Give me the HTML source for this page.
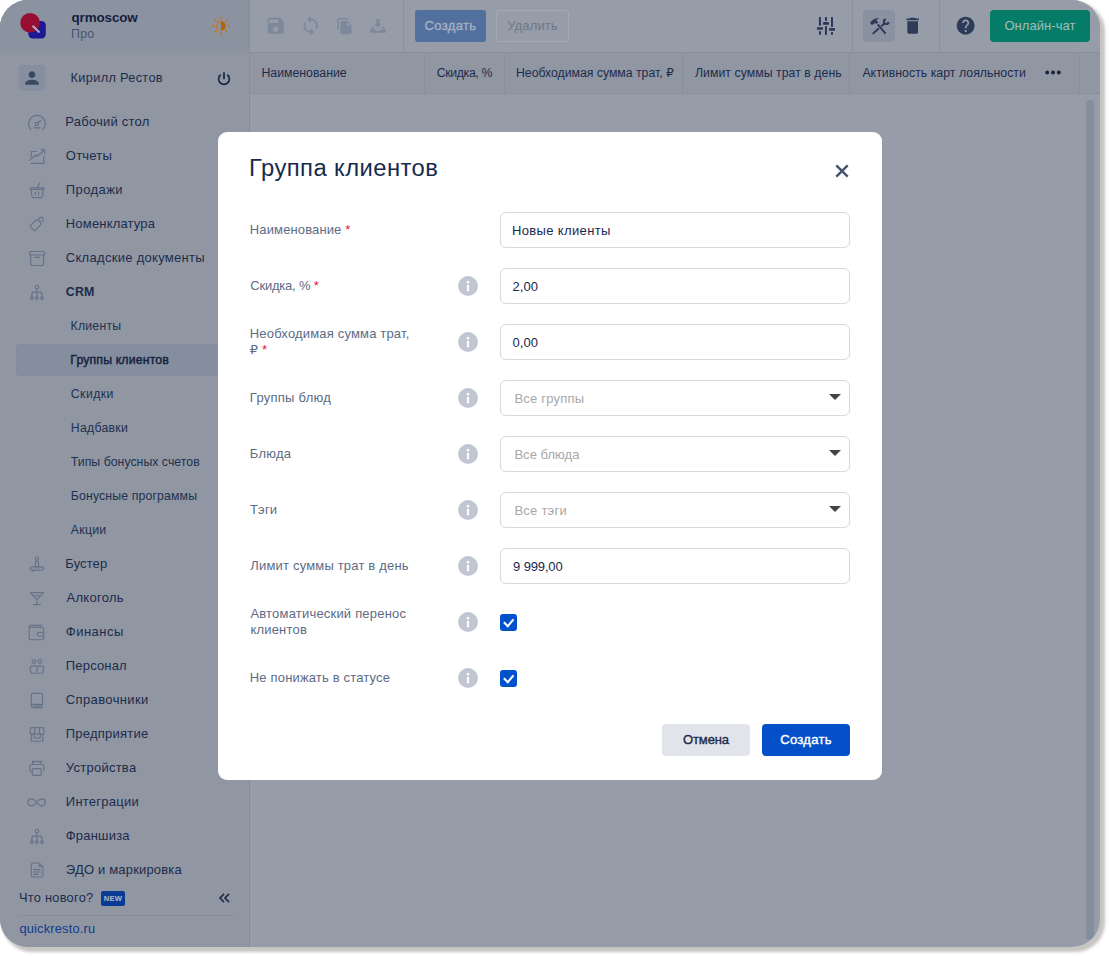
<!DOCTYPE html>
<html lang="ru">
<head>
<meta charset="utf-8">
<title>Группа клиентов</title>
<style>
*{box-sizing:border-box;margin:0;padding:0}
html,body{width:1109px;height:956px;background:#fff;overflow:hidden}
body{font-family:"Liberation Sans","DejaVu Sans",sans-serif;color:#1c2a4a;position:relative}
.abs{position:absolute}
#frame{position:absolute;left:0;top:0;width:1100px;height:947px;border-radius:28px;background:#969da8;overflow:hidden;box-shadow:3.5px 3.5px 3px 1.5px rgba(70,60,60,.30)}
/* sidebar */
#side{z-index:2;position:absolute;left:0;top:0;width:250px;height:947px;background:#9097a3;border-right:1px solid #858d9b}
#shead{position:absolute;left:0;top:0;width:249px;height:52px;background:#8b93a0}
.t{position:absolute;white-space:nowrap;line-height:1}
.mi{position:absolute;left:65.8px;font-size:13px;color:#1d2b4b;white-space:nowrap;line-height:16px;height:16px}
.si{position:absolute;left:70.8px;font-size:12.3px;color:#22304f;white-space:nowrap;line-height:16px;height:16px}
.ico{position:absolute;left:27px;width:20px;height:20px;fill:none;stroke:#667289;stroke-width:1.15;stroke-linecap:round;stroke-linejoin:round}
/* toolbar */
#tbar{position:absolute;left:0;top:0;width:1100px;height:53px;background:#969da8;border-bottom:1px solid #878f9d}
#thead{position:absolute;left:0;top:53px;width:1100px;height:41px;background:#9097a3;border-bottom:1px solid #878f9c}
.th{position:absolute;top:12px;font-size:12.3px;color:#1d2b4b;white-space:nowrap;line-height:16px}
.vd{position:absolute;width:1px;background:#878f9c}
/* modal */
#modal{z-index:3;position:absolute;left:218px;top:132px;width:664px;height:648px;background:#fff;border-radius:9px}
.lbl{position:absolute;left:32px;font-size:13px;color:#5d6b85;line-height:16px;white-space:nowrap}
.req{color:#e5103c}
.inp{position:absolute;left:282px;width:350px;height:36px;border:1px solid #d2dae2;border-radius:6px;background:#fff;font-size:13px;color:#172b4d;line-height:35.6px;padding-left:12px;white-space:nowrap}
.ph{color:#a8a8a8;padding-left:14px}
.arr{position:absolute;right:8px;top:13px;width:0;height:0;border-left:6px solid transparent;border-right:6px solid transparent;border-top:6px solid #444}
.info{position:absolute;left:240px;width:20px;height:20px}
.cb{position:absolute;left:282px;width:17px;height:17px;border-radius:3px;background:#0052cc}
.btn{position:absolute;top:592px;width:88px;height:32px;border-radius:4px;font-size:13px;-webkit-text-stroke:.4px;text-align:center;line-height:32px}
/*FIT*/
#x1{letter-spacing:-0.104px;margin-left:-0.50px}
#x2{letter-spacing:0.275px;margin-left:-1.00px}
#x3{letter-spacing:0.292px;margin-left:-0.40px}
#x4{letter-spacing:0.216px;margin-left:-0.45px}
#x5{letter-spacing:0.230px}
#x6{letter-spacing:0.416px}
#x7{letter-spacing:0.176px}
#x8{letter-spacing:0.292px}
#x9{letter-spacing:0.200px}
#x10{letter-spacing:0.202px;margin-left:-0.25px}
#x11{letter-spacing:0.146px;margin-left:-0.50px}
#x12{letter-spacing:0.410px}
#x13{letter-spacing:0.247px}
#x14{letter-spacing:0.020px}
#x15{letter-spacing:0.132px}
#x16{letter-spacing:0.271px}
#x17{letter-spacing:0.090px;margin-left:-0.50px}
#x18{letter-spacing:0.271px;margin-left:0.75px}
#x19{letter-spacing:0.479px}
#x20{letter-spacing:0.175px}
#x21{letter-spacing:0.375px}
#x22{letter-spacing:0.225px}
#x23{letter-spacing:0.257px}
#x24{letter-spacing:0.237px}
#x25{letter-spacing:0.193px}
#x26{letter-spacing:0.182px}
#x27{letter-spacing:0.280px;margin-left:-0.10px}
#x28{letter-spacing:0.209px;margin-left:0.40px}
#x29{letter-spacing:-0.010px;margin-left:-0.50px}
#x30{letter-spacing:-0.377px;margin-left:-0.20px}
#x31{letter-spacing:-0.029px}
#x32{letter-spacing:0.039px;margin-left:-0.10px}
#x33{letter-spacing:0.028px;margin-left:0.40px}
#x34{letter-spacing:0.420px;margin-left:-0.70px}
#x35{letter-spacing:0.128px;margin-left:-0.20px}
#x36{letter-spacing:0.354px;text-indent:-1.00px}
#x37{letter-spacing:-0.220px;margin-left:0.30px}
#x38{letter-spacing:0.054px;text-indent:-0.50px}
#x39{letter-spacing:0.174px;margin-left:-0.20px}
#x40{letter-spacing:0.054px;text-indent:-0.50px}
#x41{letter-spacing:0.265px;margin-left:-0.20px}
#x42{letter-spacing:0.222px;text-indent:-0.60px}
#x43{letter-spacing:0.229px;margin-left:-0.20px}
#x44{letter-spacing:0.031px;text-indent:-0.60px}
#x45{letter-spacing:0.213px;margin-left:-0.10px}
#x46{letter-spacing:0.250px;text-indent:-0.60px}
#x47{letter-spacing:0.182px;margin-left:0.30px}
#x48{letter-spacing:-0.146px;text-indent:0.10px}
#x49{letter-spacing:0.199px;margin-left:0.40px}
#x50{letter-spacing:0.163px;margin-left:-0.20px}
#x51{letter-spacing:-0.130px}
#x52{letter-spacing:0.315px}
#tb1{letter-spacing:0.357px}
#tb2{letter-spacing:0.125px}
#tb3{letter-spacing:0.055px}
/*ENDFIT*/
</style>
</head>
<body>
<div id="frame">

<!-- ============ SIDEBAR ============ -->
<div id="side">
<div id="shead"></div>
<!-- logo -->
<svg class="abs" style="left:18px;top:10px" width="32" height="32" viewBox="0 0 32 32">
<rect x="10.3" y="11" width="17.5" height="17.6" rx="4.5" fill="#1d1796"/>
<circle cx="12.1" cy="12.8" r="9.8" fill="#960f32"/>
<line x1="14.6" y1="15.8" x2="21.5" y2="22.6" stroke="#a9afba" stroke-width="2.1"/>
</svg>
<div id="x1" class="t" style="left:72px;top:11px;font-size:13.4px;font-weight:bold;color:#14213f;line-height:14px">qrmoscow</div>
<div id="x2" class="t" style="left:72px;top:27px;font-size:12.4px;color:#475470;line-height:14px">Про</div>
<!-- sun / theme -->
<svg class="abs" style="left:211px;top:16px" width="20" height="20" viewBox="-10 -10 20 20">
<g stroke="#c0751c" stroke-width="1.500" stroke-linecap="round"><line x1="6.90" y1="0.00" x2="8.50" y2="0.00"/><line x1="4.88" y1="4.88" x2="6.01" y2="6.01"/><line x1="0.00" y1="6.90" x2="0.00" y2="8.50"/><line x1="-4.88" y1="4.88" x2="-6.01" y2="6.01"/><line x1="-6.90" y1="0.00" x2="-8.50" y2="0.00"/><line x1="-4.88" y1="-4.88" x2="-6.01" y2="-6.01"/><line x1="-0.00" y1="-6.90" x2="-0.00" y2="-8.50"/><line x1="4.88" y1="-4.88" x2="6.01" y2="-6.01"/></g>
<circle r="4.400" fill="none" stroke="#c47820" stroke-width="1.400"/>
<path d="M0 -4.400A4.400 4.400 0 0 1 0 4.400Z" fill="#ab670f"/>
</svg>
<!-- user -->
<div class="abs" style="left:19px;top:65px;width:26px;height:26px;border-radius:4px;background:#868fa0"></div>
<svg class="abs" style="left:22px;top:68px" width="20" height="20" viewBox="0 0 24 24"><path fill="#3b4863" d="M12 12c2.21 0 4-1.79 4-4s-1.79-4-4-4-4 1.79-4 4 1.79 4 4 4zm0 2c-2.67 0-8 1.34-8 4v2h16v-2c0-2.66-5.33-4-8-4z"/></svg>
<div id="x3" class="t" style="left:71px;top:70px;font-size:12.8px;color:#1d2b4b;line-height:16px">Кирилл Рестов</div>
<svg class="abs" style="left:213.800px;top:68.800px" width="20" height="20" viewBox="-10 -10 20 20" fill="none" stroke="#1a2747" stroke-width="1.700" stroke-linecap="butt"><path d="M-3.32 -4.26A5.4 5.4 0 1 0 3.32 -4.26"/><path d="M0 -6.700V.3"/></svg>

<!-- menu -->
<div id="x4" class="mi" style="top:114px">Рабочий стол</div>
<div id="x5" class="mi" style="top:148px">Отчеты</div>
<div id="x6" class="mi" style="top:182px">Продажи</div>
<div id="x7" class="mi" style="top:216px">Номенклатура</div>
<div id="x8" class="mi" style="top:250px">Складские документы</div>
<div id="x9" class="mi" style="top:284px;font-weight:bold;font-size:12.4px">CRM</div>

<div class="abs" style="left:16px;top:344px;width:234px;height:32px;border-radius:4px;background:#858e9f"></div>
<div id="x10" class="si" style="top:318px">Клиенты</div>
<div id="x11" class="si" style="top:352px;font-size:12.3px;color:#16223f;-webkit-text-stroke:.45px #16223f">Группы клиентов</div>
<div id="x12" class="si" style="top:386px">Скидки</div>
<div id="x13" class="si" style="top:420px">Надбавки</div>
<div id="x14" class="si" style="top:454px">Типы бонусных счетов</div>
<div id="x15" class="si" style="top:488px">Бонусные программы</div>
<div id="x16" class="si" style="top:522px">Акции</div>

<div id="x17" class="mi" style="top:556px">Бустер</div>
<div id="x18" class="mi" style="top:590px">Алкоголь</div>
<div id="x19" class="mi" style="top:624px">Финансы</div>
<div id="x20" class="mi" style="top:658px">Персонал</div>
<div id="x21" class="mi" style="top:692px">Справочники</div>
<div id="x22" class="mi" style="top:726px">Предприятие</div>
<div id="x23" class="mi" style="top:760px">Устройства</div>
<div id="x24" class="mi" style="top:794px">Интеграции</div>
<div id="x25" class="mi" style="top:828px">Франшиза</div>
<div id="x26" class="mi" style="top:862px">ЭДО и маркировка</div>

<!-- footer -->
<div id="x27" class="t" style="left:19px;top:890px;font-size:12.8px;color:#1d2b4b;line-height:16px">Что нового?</div>
<div class="abs" style="left:101px;top:891px;width:24px;height:15px;border-radius:2px;background:#0a3a94;color:#b3bccb;font-size:7.600px;font-weight:bold;line-height:15.500px;text-align:center;letter-spacing:.3px">NEW</div>
<svg class="abs" style="left:217px;top:891px" width="14" height="14" viewBox="0 0 14 14" fill="none" stroke="#1d2b4b" stroke-width="1.700"><path d="M7 2.900L3 7l4 4.100M12 2.900L8 7l4 4.100"/></svg>
<div class="abs" style="left:19px;top:915px;width:216px;height:1px;background:#858e9c"></div>
<div id="x28" class="t" style="left:19px;top:920.500px;font-size:12.8px;color:#0f3a8e;line-height:16px">quickresto.ru</div>
<!-- gauge -->
<svg class="ico" style="top:112px" viewBox="0 0 20 20"><path d="M3.730 17.500A8.400 8.400 0 1 1 16.070 17.500"/><circle cx="9.700" cy="12" r="1.700"/><path d="M10.900 10.800L14 8.300M7.100 15.800h5.800"/></svg>
<!-- chart -->
<svg class="ico" style="top:146px" viewBox="0 0 20 20"><path d="M4.300 11V5.500H9.500M4.300 17.400h12.500V10.300M2.200 14.400L9 9l1.300 1.300L17.600 3.700M13.900 3.700h3.700v3.900"/></svg>
<!-- basket -->
<svg class="ico" style="top:180px" viewBox="0 0 20 20"><rect x="2.900" y="7.700" width="14.400" height="1.700" rx=".8"/><path d="M3.900 9.400l1.100 7.300c.1.500.5.900 1 .9h8.200c.5 0 .900-.400 1-.9l1.100-7.300M10.300 7.600l2.400-4.400M8.400 12v3M11.600 12v3"/></svg>
<!-- tag -->
<svg class="ico" style="top:214px" viewBox="0 0 20 20"><path d="M11.900 6H9L3.400 11.700c-.3.300-.3.900 0 1.200l3.700 3.500c.3.300.9.300 1.200 0l5.400-5.800V7.200"/><path d="M12.230 7.340A2.400 2.400 0 1 1 15.610 7.640"/></svg>
<!-- archive -->
<svg class="ico" style="top:248px" viewBox="0 0 20 20"><rect x="2.600" y="3.500" width="15" height="3.500" rx="1"/><path d="M3.700 7v8.500c0 1.100.9 2 2 2h8.800c1.100 0 2-.9 2-2V7M7.600 9.400h4.800"/></svg>
<!-- crm -->
<svg class="ico" style="top:282px" viewBox="0 0 20 20"><circle cx="9.900" cy="5.100" r="1.900"/><path d="M9.900 7v7.600M4.800 14.600v-1.800c0-1.500 1.200-2.700 2.700-2.700h4.800c1.500 0 2.700 1.200 2.700 2.700v1.800"/><circle cx="4.800" cy="16.100" r="1.300"/><circle cx="9.900" cy="16.100" r="1.300"/><circle cx="15" cy="16.100" r="1.300"/></svg>
<!-- booster -->
<svg class="ico" style="top:554px" viewBox="0 0 20 20"><circle cx="9.900" cy="4.600" r="1.600"/><path d="M8.300 14.800V9c0-1.100.7-1.900 1.600-1.900s1.600.8 1.600 1.900v5.800"/><ellipse cx="9.900" cy="14.500" rx="6.800" ry="1.900"/><path d="M5.200 15.700l1.200 1-1.500.6"/></svg>
<!-- martini -->
<svg class="ico" style="top:588px" viewBox="0 0 20 20"><path d="M3.500 4.600h13L9.900 11.900zM9.900 11.900v4.700M6.600 16.600h6.800M6.300 7.700h7.400"/></svg>
<!-- wallet -->
<svg class="ico" style="top:622px" viewBox="0 0 20 20"><path d="M15 3.400H4.200c-1.100 0-2 .9-2 2v10.300c0 1.100.9 2 2 2H15c.8 0 1.500-.7 1.500-1.500V14M2.600 5.300H15c.8 0 1.500.7 1.500 1.500v3.600"/><rect x="10.300" y="10.400" width="6.700" height="3.600" rx="1.200"/></svg>
<!-- people -->
<svg class="ico" style="top:656px" viewBox="0 0 20 20"><circle cx="6.900" cy="5.500" r="1.800"/><circle cx="12.900" cy="5.500" r="1.800"/><path d="M5.400 9.900h2.900c1.300 0 2.200 1 2.200 2.200 0 1.700-.4 3.400-1.200 5.100H4.400c-.8-1.700-1.300-3.400-1.300-5.100 0-1.200 1-2.200 2.300-2.200zM11.400 9.900h2.900c1.300 0 2.300 1 2.300 2.200 0 1.700-.4 3.400-1.200 5.100h-3.800"/></svg>
<!-- book -->
<svg class="ico" style="top:690px" viewBox="0 0 20 20"><path d="M15.500 14.300V4.300c0-.6-.4-1-1-1H6c-1 0-1.700.8-1.700 1.700v10.800c0 1 .8 1.800 1.800 1.800h9.400M15.500 14.300H6c-.9 0-1.700.6-1.700 1.500M6.500 15.800h9"/></svg>
<!-- shop -->
<svg class="ico" style="top:724px" viewBox="0 0 20 20"><path d="M4 3.600h12.200l1.100 4.200c0 1.400-1 2.600-2.400 2.600s-2.400-1.200-2.400-2.600V3.600M12.500 7.800c0 1.400-1.100 2.600-2.400 2.600S7.700 9.200 7.700 7.800V3.600M7.700 7.800c0 1.400-1 2.600-2.400 2.600S2.900 9.200 2.900 7.800L4 3.600M4.300 10.400v6.800h11.500v-6.800M7 11v3h6.200v-3"/></svg>
<!-- printer -->
<svg class="ico" style="top:758px" viewBox="0 0 20 20"><path d="M5.500 6.500V3l1.400 1 1.400-1 1.500 1 1.400-1 1.400 1 1.400-1v3.500M5.300 14H4.400c-.8 0-1.500-.7-1.500-1.500V8c0-.8.700-1.500 1.500-1.500h10.800c.8 0 1.500.7 1.500 1.500v4.500"/><rect x="5.300" y="10.600" width="8.900" height="6.800" rx="1"/></svg>
<!-- infinity -->
<svg class="ico" style="top:792px" viewBox="0 0 20 20"><path d="M9.600 10.300C8 8.400 6.500 6.800 4.600 6.800 2.500 6.800.9 8.400.9 10.300s1.600 3.500 3.700 3.500c1.900 0 3.400-1.600 5-3.500s3.100-3.500 5-3.500c2.100 0 3.700 1.600 3.700 3.500s-1.600 3.500-3.700 3.500c-1.900 0-3.400-1.600-5-3.500z"/></svg>
<!-- franchise -->
<svg class="ico" style="top:826px" viewBox="0 0 20 20"><circle cx="9.900" cy="5.100" r="1.900"/><path d="M9.900 7v7.600M4.800 14.600v-1.800c0-1.500 1.200-2.700 2.700-2.700h4.800c1.500 0 2.700 1.200 2.700 2.700v1.800"/><circle cx="4.800" cy="16.100" r="1.300"/><circle cx="9.900" cy="16.100" r="1.300"/><circle cx="15" cy="16.100" r="1.300"/></svg>
<!-- doc -->
<svg class="ico" style="top:860px" viewBox="0 0 20 20"><path d="M12.200 3H6.100c-1 0-1.800.8-1.800 1.800v10.400c0 1 .8 1.800 1.800 1.800h8c1 0 1.800-.8 1.800-1.800V6.700zM12.200 3v2.500c0 .7.500 1.200 1.200 1.200h2.500M6.700 9.600h6.600M6.700 12h6.600M6.700 14.400h4.600"/></svg>

</div>

<!-- ============ TOOLBAR ============ -->
<div id="tbar">
<!-- left disabled icons (21.33px = 24 * .889) -->
<svg class="abs" style="left:264.800px;top:15.300px" width="21.33" height="21.33" viewBox="0 0 24 24"><path fill="#7d889b" d="M17 3H5c-1.11 0-2 .9-2 2v14c0 1.1.89 2 2 2h14c1.1 0 2-.9 2-2V7l-4-4zm-5 16c-1.66 0-3-1.34-3-3s1.34-3 3-3 3 1.34 3 3-1.34 3-3 3zm3-10H5V5h10v4z"/></svg>
<svg class="abs" style="left:299.700px;top:15.300px" width="21.33" height="21.33" viewBox="0 0 24 24"><path fill="#7d889b" d="M12 4V1L8 5l4 4V6c3.31 0 6 2.69 6 6 0 1.01-.25 1.97-.7 2.8l1.46 1.46C19.54 15.03 20 13.57 20 12c0-4.42-3.58-8-8-8zm0 14c-3.31 0-6-2.69-6-6 0-1.01.25-1.97.7-2.8L5.24 7.74C4.46 8.97 4 10.43 4 12c0 4.42 3.58 8 8 8v3l4-4-4-4v3z"/></svg>
<svg class="abs" style="left:336px;top:16px" width="20" height="20" viewBox="0 0 20 20" fill="#7d889b"><path d="M11.900 2.100H2.700c-.8 0-1.500.7-1.500 1.500v10h1.500v-10h9.200z"/><path d="M5.900 5h5.600l4.100 4.100v7.600c0 .8-.7 1.500-1.500 1.500H5.900c-.8 0-1.500-.7-1.500-1.500V6.500c0-.8.700-1.500 1.500-1.500z"/><path d="M11 6v3.600h3.600z" fill="#969da8"/></svg>
<svg class="abs" style="left:368px;top:16px" width="20" height="20" viewBox="0 0 20 20" fill="#7d889b"><path d="M8.500 2.900h3.100v4.700h2.300L10 11.400 6.100 7.600h2.400z"/><path d="M4.700 10.700h1.800l-2 2.900h2.900c.2.900 1.200 1.700 2.600 1.700s2.400-.8 2.600-1.700h2.900l-2-2.900h1.800l2.600 3.500v1.800c0 .4-.4.800-.8.800H2.900c-.4 0-.8-.4-.8-.8v-1.800z"/></svg>
<div class="vd" style="left:403px;top:0;height:52px"></div>
<!-- buttons -->
<div id="tb1" class="abs" style="left:415px;top:10px;width:71px;height:32px;border-radius:3px;background:#52709e;color:#a3afc4;font-size:13px;-webkit-text-stroke:.4px;text-align:center;line-height:32px">Создать</div>
<div id="tb2" class="abs" style="left:496px;top:10px;width:73px;height:32px;border-radius:3px;border:1px solid #a3aab5;color:#6e788a;font-size:13px;text-align:center;line-height:30px">Удалить</div>
<!-- right icons -->
<svg class="abs" style="left:816px;top:16px" width="20" height="20" viewBox="0 0 20 20" fill="#2a3757">
<rect x="2.950" y="1.100" width="2" height="8.500"/><rect x="1" y="11.200" width="5.900" height="2.600" rx=".3"/><rect x="2.950" y="15.200" width="2" height="3.600"/>
<rect x="8.950" y="1.100" width="2" height="3.700"/><rect x="7.100" y="6.100" width="5.800" height="2.700" rx=".3"/><rect x="8.950" y="10.200" width="2" height="8.600"/>
<rect x="15" y="1.100" width="2" height="9.700"/><rect x="13.100" y="12.100" width="5.800" height="2.700" rx=".3"/><rect x="15" y="16.100" width="2" height="2.700"/>
</svg>
<div class="vd" style="left:852px;top:0;height:52px"></div>
<div class="abs" style="left:863px;top:10px;width:32px;height:32px;border-radius:4px;background:#8a92a2"></div>
<svg class="abs" style="left:868px;top:16px" width="24" height="20" viewBox="0 0 24 20" fill="none" stroke="#2d3a58">
<path d="M9.700 8.300L17.600 17.600" stroke-width="1.900"/>
<path d="M2.100 7.200C3.600 4.300 6.600 1.900 11.700 2.100C9.600 2.600 8.700 3.700 8.500 4.600L10.300 6.300L8.600 8.100L7.300 6.900L3.900 9.100Z" fill="#2d3a58" stroke="none"/>
<path d="M16.600 7.200L13.300 10.200M11 12.200L4.600 17.900" stroke-width="1.900"/>
<path d="M20.560 6.020A2.400 2.400 0 1 1 17.780 3.240" stroke-width="2.100"/>
</svg>
<svg class="abs" style="left:902.300px;top:15.200px" width="21.33" height="21.33" viewBox="0 0 24 24"><path fill="#2d3a58" d="M6 19c0 1.100.9 2 2 2h8c1.100 0 2-.9 2-2V7H6v12zM19 4h-3.500l-1-1h-5l-1 1H5v2h14V4z"/></svg>
<div class="vd" style="left:939px;top:0;height:52px"></div>
<svg class="abs" style="left:955.400px;top:15.300px" width="21.33" height="21.33" viewBox="0 0 24 24"><path fill="#2d3a58" d="M12 2C6.480 2 2 6.480 2 12s4.480 10 10 10 10-4.480 10-10S17.520 2 12 2zm1 17h-2v-2h2v2zm2.070-7.750l-.9.920C13.450 12.900 13 13.500 13 15h-2v-.5c0-1.100.450-2.100 1.170-2.830l1.240-1.260c.370-.360.590-.860.590-1.410 0-1.100-.9-2-2-2s-2 .9-2 2H8c0-2.210 1.790-4 4-4s4 1.790 4 4c0 .880-.360 1.680-.930 2.250z"/></svg>
<div id="tb3" class="abs" style="left:990px;top:10px;width:100px;height:32px;border-radius:4px;background:#057c67;color:#a3bdbb;font-size:13px;text-align:center;line-height:32px">Онлайн-чат</div>

</div>
<div id="thead">
<div id="x29" class="th" style="left:262px">Наименование</div>
<div class="vd" style="left:424px;top:0;height:40px"></div>
<div id="x30" class="th" style="left:437px">Скидка, %</div>
<div class="vd" style="left:504px;top:0;height:40px"></div>
<div id="x31" class="th" style="left:516px">Необходимая сумма трат, ₽</div>
<div class="vd" style="left:682px;top:0;height:40px"></div>
<div id="x32" class="th" style="left:695px">Лимит суммы трат в день</div>
<div class="vd" style="left:849px;top:0;height:40px"></div>
<div id="x33" class="th" style="left:862px">Активность карт лояльности</div>
<svg class="abs" style="left:1045px;top:17.300px" width="16" height="5" viewBox="0 0 16 5" fill="#14213f"><circle cx="2.2" cy="2.5" r="1.9"/><circle cx="8" cy="2.5" r="1.9"/><circle cx="13.800" cy="2.5" r="1.9"/></svg>
<div class="vd" style="left:1079px;top:0;height:40px"></div>

</div>
<!-- scrollbar -->
<div class="abs" style="left:1086px;top:100px;width:8px;height:840px;border-radius:4px;background:#858e9c"></div>

<!-- ============ MODAL ============ -->
<div id="modal">
<div id="x34" class="t" style="left:32px;top:22.500px;font-size:23px;color:#172b4d;line-height:26px;transform:scaleX(1.035);transform-origin:0 0">Группа клиентов</div>
<svg class="abs" style="left:615px;top:30px" width="18" height="18" viewBox="0 0 18 18" fill="none" stroke="#44526e" stroke-width="2.400"><path d="M3.300 3.300l11.400 11.400M14.700 3.300L3.300 14.700"/></svg>

<!-- row 1 -->
<div id="x35" class="lbl" style="top:90px">Наименование <span class="req">*</span></div>
<div id="x36" class="inp" style="top:80px">Новые клиенты</div>
<!-- row 2 -->
<div id="x37" class="lbl" style="top:146px">Скидка, % <span class="req">*</span></div>
<svg class="info" style="top:144px" viewBox="0 0 24 24"><circle cx="12" cy="12" r="12" fill="#c1c7d2"/><rect x="10.700" y="10.800" width="2.600" height="7.400" rx=".3" fill="#fff"/><circle cx="12" cy="7.400" r="1.600" fill="#fff"/></svg>
<div id="x38" class="inp" style="top:136px">2,00</div>
<!-- row 3 -->
<div id="x39" class="lbl" style="top:194px">Необходимая сумма трат,<br>₽ <span class="req">*</span></div>
<svg class="info" style="top:200px" viewBox="0 0 24 24"><circle cx="12" cy="12" r="12" fill="#c1c7d2"/><rect x="10.700" y="10.800" width="2.600" height="7.400" rx=".3" fill="#fff"/><circle cx="12" cy="7.400" r="1.600" fill="#fff"/></svg>
<div id="x40" class="inp" style="top:192px">0,00</div>
<!-- row 4 -->
<div id="x41" class="lbl" style="top:258px">Группы блюд</div>
<svg class="info" style="top:256px" viewBox="0 0 24 24"><circle cx="12" cy="12" r="12" fill="#c1c7d2"/><rect x="10.700" y="10.800" width="2.600" height="7.400" rx=".3" fill="#fff"/><circle cx="12" cy="7.400" r="1.600" fill="#fff"/></svg>
<div id="x42" class="inp ph" style="top:248px">Все группы<i class="arr"></i></div>
<!-- row 5 -->
<div id="x43" class="lbl" style="top:314px">Блюда</div>
<svg class="info" style="top:312px" viewBox="0 0 24 24"><circle cx="12" cy="12" r="12" fill="#c1c7d2"/><rect x="10.700" y="10.800" width="2.600" height="7.400" rx=".3" fill="#fff"/><circle cx="12" cy="7.400" r="1.600" fill="#fff"/></svg>
<div id="x44" class="inp ph" style="top:304px">Все блюда<i class="arr"></i></div>
<!-- row 6 -->
<div id="x45" class="lbl" style="top:370px">Тэги</div>
<svg class="info" style="top:368px" viewBox="0 0 24 24"><circle cx="12" cy="12" r="12" fill="#c1c7d2"/><rect x="10.700" y="10.800" width="2.600" height="7.400" rx=".3" fill="#fff"/><circle cx="12" cy="7.400" r="1.600" fill="#fff"/></svg>
<div id="x46" class="inp ph" style="top:360px">Все тэги<i class="arr"></i></div>
<!-- row 7 -->
<div id="x47" class="lbl" style="top:426px">Лимит суммы трат в день</div>
<svg class="info" style="top:424px" viewBox="0 0 24 24"><circle cx="12" cy="12" r="12" fill="#c1c7d2"/><rect x="10.700" y="10.800" width="2.600" height="7.400" rx=".3" fill="#fff"/><circle cx="12" cy="7.400" r="1.600" fill="#fff"/></svg>
<div id="x48" class="inp" style="top:416px">9 999,00</div>
<!-- row 8 -->
<div id="x49" class="lbl" style="top:474px">Автоматический перенос<br>клиентов</div>
<svg class="info" style="top:480px" viewBox="0 0 24 24"><circle cx="12" cy="12" r="12" fill="#c1c7d2"/><rect x="10.700" y="10.800" width="2.600" height="7.400" rx=".3" fill="#fff"/><circle cx="12" cy="7.400" r="1.600" fill="#fff"/></svg>
<div class="cb" style="top:482px"><svg width="17" height="17" viewBox="0 0 17 17" fill="none" stroke="#fff" stroke-width="2.100"><path d="M3.900 8.200l3.900 4L13.500 5.400"/></svg></div>
<!-- row 9 -->
<div id="x50" class="lbl" style="top:538px">Не понижать в статусе</div>
<svg class="info" style="top:536px" viewBox="0 0 24 24"><circle cx="12" cy="12" r="12" fill="#c1c7d2"/><rect x="10.700" y="10.800" width="2.600" height="7.400" rx=".3" fill="#fff"/><circle cx="12" cy="7.400" r="1.600" fill="#fff"/></svg>
<div class="cb" style="top:538px"><svg width="17" height="17" viewBox="0 0 17 17" fill="none" stroke="#fff" stroke-width="2.100"><path d="M3.900 8.200l3.900 4L13.500 5.400"/></svg></div>

<div id="x51" class="btn" style="left:444px;background:#e1e4ea;color:#1f2d4d">Отмена</div>
<div id="x52" class="btn" style="left:544px;background:#0350c8;color:#fff">Создать</div>

</div>

</div>
</body>
</html>
